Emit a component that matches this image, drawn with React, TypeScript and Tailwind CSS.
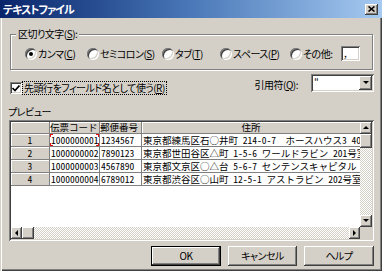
import React from "react";

const raised =
  "bg-[#d4d0c8] shadow-[inset_-1px_-1px_#404040,inset_1px_1px_#fff,inset_-2px_-2px_#808080]";
const sunken =
  "shadow-[inset_1px_1px_#808080,inset_-1px_-1px_#fff,inset_2px_2px_#404040,inset_-2px_-2px_#d4d0c8]";
const dither =
  "bg-[repeating-conic-gradient(#ffffff_0_25%,#d4d0c8_0_50%)] bg-[length:2px_2px]";

const Acc = ({ k }: { k: string }) => (
  <>
    (<span className="underline underline-offset-1">{k}</span>)
  </>
);

const Radio = ({ checked, children }: { checked?: boolean; children: React.ReactNode }) => (
  <label className="flex items-center gap-[1px]">
    <span
      className={`w-[12px] h-[12px] rounded-full bg-white flex items-center justify-center shrink-0 ${sunken}`}
    >
      {checked && <span className="w-[4px] h-[4px] rounded-full bg-black" />}
    </span>
    <span className="whitespace-nowrap">{children}</span>
  </label>
);

const Arrow = ({ dir }: { dir: "up" | "down" | "left" | "right" }) => {
  const pts = {
    up: "1,5 4,2 7,5",
    down: "1,2 4,5 7,2",
    left: "5,1 2,4 5,7",
    right: "2,1 5,4 2,7",
  }[dir];
  return (
    <svg width="8" height="8" viewBox="0 0 8 8">
      <polygon points={pts} fill="#000" />
    </svg>
  );
};

const ScrollBtn = ({ dir, className = "" }: { dir: "up" | "down" | "left" | "right"; className?: string }) => (
  <div className={`${raised} flex items-center justify-center shrink-0 ${className}`}>
    <Arrow dir={dir} />
  </div>
);

const rows = [
  ["1", "1000000001", "1234567", "東京都練馬区石○井町 214-0-7  ホースハウス3 401号室"],
  ["2", "1000000002", "7890123", "東京都世田谷区△町 1-5-6 ワールドラビン 201号室"],
  ["3", "1000000003", "4567890", "東京都文京区○△台 5-6-7 センテンスキャピタル"],
  ["4", "1000000004", "6789012", "東京都渋谷区○山町 12-5-1 アストラビン 202号室"],
];

const Corner = ({ pos }: { pos: string }) => (
  <span className={`absolute w-[3px] h-[3px] border-[#e01010] ${pos}`} />
);

export default function App() {
  return (
    <div className="w-[382px] h-[271px] bg-[#d4d0c8] flex flex-col overflow-hidden font-['Noto_Sans_CJK_JP',sans-serif] [font-feature-settings:'palt'] text-[10px] tracking-[-0.5px] leading-none text-black">
      {/* title bar */}
      <div className="h-[18px] shrink-0 bg-gradient-to-r from-[#0a246a] via-[#4a78b8] to-[#a6caf0] flex items-center justify-between pl-[3px] pr-[4px]">
        <span className="text-white font-bold text-[11px] tracking-[-1px]">テキストファイル</span>
        <div className={`w-[13px] h-[11px] flex items-center justify-center ${raised}`}>
          <svg width="7" height="6" viewBox="0 0 7 6">
            <path d="M0.5 0.5 L6.5 5.5 M6.5 0.5 L0.5 5.5" stroke="#000" strokeWidth="1.6" />
          </svg>
        </div>
      </div>

      {/* dialog body */}
      <div className="flex-1 flex flex-col pl-[9px] pr-[8px] shadow-[inset_1px_0_#d4d0c8,inset_2px_0_#fff,inset_-1px_-1px_#404040,inset_-2px_-2px_#808080,inset_0_-3px_#d4d0c8]">
        {/* delimiter group */}
        <div className="relative mt-[16px] ml-[1px] mr-[1px] h-[36px] border border-[#808080] shadow-[inset_1px_1px_#fff,1px_1px_#fff] flex items-center pl-[14px] pt-[3px]">
          <span className="absolute -top-[6px] left-[5px] bg-[#d4d0c8] px-[2px] whitespace-nowrap">
            区切り文字<Acc k="S" />:
          </span>
          <div className="w-[62px]">
            <Radio checked>
              カンマ<Acc k="C" />
            </Radio>
          </div>
          <div className="w-[75px]">
            <Radio>
              セミコロン<Acc k="S" />
            </Radio>
          </div>
          <div className="w-[58px]">
            <Radio>
              タブ<Acc k="T" />
            </Radio>
          </div>
          <div className="w-[70px]">
            <Radio>
              スペース<Acc k="P" />
            </Radio>
          </div>
          <div className="w-[51px]">
            <Radio>その他:</Radio>
          </div>
          <div className={`w-[19px] h-[15px] bg-white flex items-end pl-[3px] pb-[3px] ${sunken}`}>
            <span className="text-[10px]">,</span>
          </div>
        </div>

        {/* header row option + quote */}
        <div className="flex items-start mt-[4px] h-[18px]">
          <div className="flex items-center mt-[8px] ml-[1px] gap-[1px]">
            <span className={`w-[12px] h-[12px] bg-white flex items-center justify-center ${sunken}`}>
              <svg width="8" height="7" viewBox="0 0 8 7">
                <path d="M0.5 3 L3 5.5 L7.5 0.5" stroke="#000" strokeWidth="1.7" fill="none" />
              </svg>
            </span>
            <span className="outline-1 outline-dotted outline-black px-[1px] py-[1px] whitespace-nowrap">
              先頭行をフィールド名として使う<Acc k="R" />
            </span>
          </div>
          <span className="ml-auto mt-[6px] mr-[13px] whitespace-nowrap">
            引用符<Acc k="Q" />:
          </span>
          <div className={`w-[63px] h-[18px] bg-white flex items-stretch ${sunken} p-[2px]`}>
            <span className="flex-1 pl-[1px] pt-[1px] text-[10px]">"</span>
            <ScrollBtn dir="down" className="w-[13px]" />
          </div>
        </div>

        {/* preview */}
        <span className="mt-[15px] -ml-[1px]">プレビュー</span>
        <div className={`mt-[3px] h-[121px] w-[365px] p-[2px] flex bg-white ${sunken}`}>
          <div className="w-[349px] flex flex-col">
            <div className="flex-1 bg-white overflow-hidden font-['Noto_Sans_CJK_JP',sans-serif] [font-feature-settings:'hwid'] tracking-normal text-[9.5px]">
              <div className="grid grid-cols-[39px_50px_42px_218px] h-[12px] bg-[#d4d0c8]">
                <div className="border-r border-b border-[#808080] shadow-[inset_1px_1px_#fff]" />
                <div className="border-r border-b border-[#808080] shadow-[inset_1px_1px_#fff] pt-[1px] whitespace-nowrap">伝票コード</div>
                <div className="border-r border-b border-[#808080] shadow-[inset_1px_1px_#fff] pt-[1px] whitespace-nowrap">郵便番号</div>
                <div className="border-b border-[#808080] shadow-[inset_1px_1px_#fff] pt-[1px] text-center whitespace-nowrap">住所</div>
              </div>
              {rows.map((r, i) => (
                <div key={r[0]} className="grid grid-cols-[39px_50px_42px_218px] h-[13px]">
                  <div className="bg-[#d4d0c8] border-r border-b border-[#808080] shadow-[inset_1px_1px_#fff] text-center pt-[2px]">
                    {r[0]}
                  </div>
                  <div className="relative border-r border-b border-[#808080] pt-[2px] pl-[1px] whitespace-nowrap overflow-hidden">
                    {r[1]}
                    {i === 0 && (
                      <>
                        <Corner pos="top-0 left-0 border-t-[1.5px] border-l-[1.5px]" />
                        <Corner pos="top-0 right-0 border-t-[1.5px] border-r-[1.5px]" />
                        <Corner pos="bottom-0 left-0 border-b-[1.5px] border-l-[1.5px]" />
                        <Corner pos="bottom-0 right-0 border-b-[1.5px] border-r-[1.5px]" />
                      </>
                    )}
                  </div>
                  <div className="border-r border-b border-[#808080] pt-[2px] pl-[1px] whitespace-nowrap overflow-hidden">
                    {r[2]}
                  </div>
                  <div className="border-b border-[#808080] pt-[2px] pl-[1px] whitespace-pre overflow-hidden">
                    {r[3]}
                  </div>
                </div>
              ))}
            </div>
            <div className="h-[12px] flex">
              <ScrollBtn dir="left" className="w-[11px]" />
              <div className={`w-[12px] ${raised}`} />
              <div className={`flex-1 ${dither}`} />
              <ScrollBtn dir="right" className="w-[11px]" />
            </div>
          </div>
          <div className="w-[12px] flex flex-col">
            <ScrollBtn dir="up" className="h-[12px]" />
            <div className={`h-[14px] ${raised}`} />
            <div className={`flex-1 ${dither}`} />
            <ScrollBtn dir="down" className="h-[12px]" />
            <div className="h-[12px] bg-[#d4d0c8]" />
          </div>
        </div>

        {/* buttons */}
        <div className="flex justify-end gap-[7px] mt-[5px]">
          <div className="w-[70px] h-[20px] border border-black">
            <div className={`w-full h-full flex items-center justify-center ${raised}`}>OK</div>
          </div>
          <div className={`w-[69px] h-[20px] flex items-center justify-center ${raised}`}>キャンセル</div>
          <div className={`w-[70px] h-[20px] flex items-center justify-center ${raised}`}>ヘルプ</div>
        </div>
      </div>
    </div>
  );
}
